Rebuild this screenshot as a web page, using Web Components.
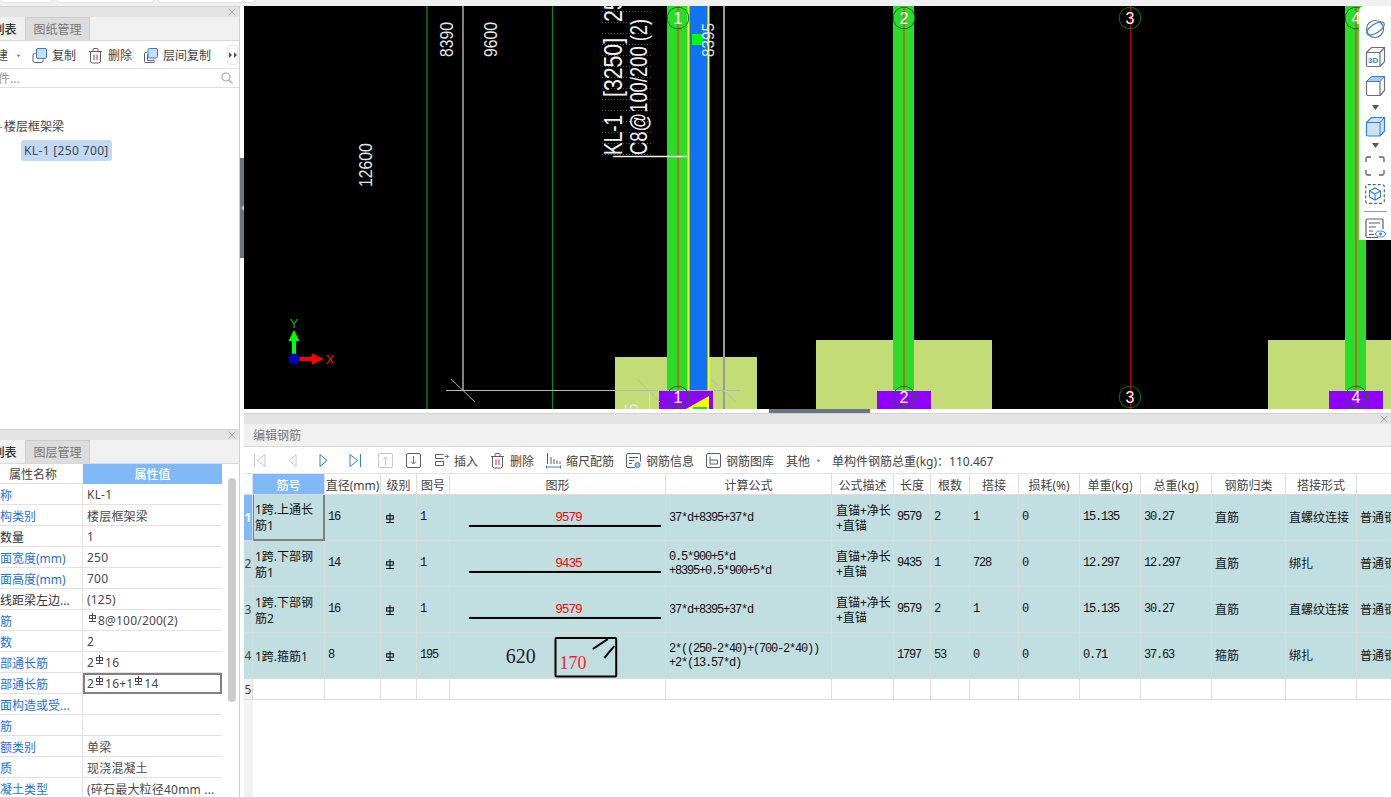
<!DOCTYPE html>
<html lang="zh">
<head>
<meta charset="utf-8">
<title>编辑钢筋</title>
<style>
  html, body { margin: 0; height: 100%; overflow: hidden; background: #fff; }
  body { font: 12px "Noto Sans", "Noto Sans CJK SC", sans-serif; color: #444; }
</style>
</head>
<body>
<work-layout>
  <dock-panel slot="left-top">
    <tab-strip tabs="构件列表,图纸管理" offset="-40"></tab-strip>
    <tool-bar offset="-16" height="27">
      <tool-btn>新建</tool-btn>
      <ui-icon name="caret" size="7" style="margin:0 0 0 7px"></ui-icon>
      <tool-btn icon="copy" style="margin-left:10px">复制</tool-btn>
      <tool-btn icon="trash" style="margin-left:12px">删除</tool-btn>
      <tool-btn icon="copy2" style="margin-left:11px">层间复制</tool-btn>
      <more-btn style="margin-left:auto;margin-right:1px"></more-btn>
    </tool-bar>
    <search-row placeholder="搜索构件..."></search-row>
    <comp-tree></comp-tree>
  </dock-panel>

  <dock-panel slot="left-bottom">
    <tab-strip tabs="属性列表,图层管理" offset="-40"></tab-strip>
    <prop-grid></prop-grid>
  </dock-panel>

  <cad-canvas slot="canvas">
    <view-bar></view-bar>
  </cad-canvas>

  <dock-panel slot="bottom">
    <caption-row>编辑钢筋</caption-row>
    <tool-bar offset="7" height="26">
      <tool-btn icon="first" style="margin-left:1px"></tool-btn>
      <tool-btn icon="prev" style="margin-left:18px"></tool-btn>
      <tool-btn icon="next" style="margin-left:16px"></tool-btn>
      <tool-btn icon="last" style="margin-left:17px"></tool-btn>
      <tool-btn icon="up" style="margin-left:15px"></tool-btn>
      <tool-btn icon="down" style="margin-left:13px"></tool-btn>
      <tool-btn icon="insert" style="margin-left:13px">插入</tool-btn>
      <tool-btn icon="trash" style="margin-left:12px">删除</tool-btn>
      <tool-btn icon="ruler" style="margin-left:12px">缩尺配筋</tool-btn>
      <tool-btn icon="info" style="margin-left:12px">钢筋信息</tool-btn>
      <tool-btn icon="lib" style="margin-left:12px">钢筋图库</tool-btn>
      <tool-btn style="margin-left:12px">其他</tool-btn>
      <ui-icon name="caret" size="7" style="margin-left:5px"></ui-icon>
      <span style="margin-left:10px">单构件钢筋总重(kg)：110.467</span>
    </tool-bar>
    <rebar-table></rebar-table>
  </dock-panel>
</work-layout>

<script>
// 图标 (inline svg)
const DARK = '#5a5f66';
const BLUE = '#2f7fe0';
const ICONS = {
  caret: `<path d="M3 6h9l-4.500 5z" fill="#888"/>`,
  copy: `<path d="M3.500 5.500h-1a1.500 1.500 0 0 0-1.500 1.500v6a1.500 1.500 0 0 0 1.500 1.500h7a1.500 1.500 0 0 0 1.500-1.500v-1.500" fill="none" stroke="${DARK}"/><rect x="4.500" y=".5" width="10" height="10" rx="1.500" fill="#c9def6" stroke="${BLUE}"/>`,
  copy2: `<path d="M3.500 4.500h-1a1 1 0 0 0-1 1v8a1 1 0 0 0 1 1h8a1 1 0 0 0 1-1v-1M5.500 6.500h-1v6h6v-1" fill="none" stroke="${DARK}"/><rect x="5" y=".5" width="9.500" height="9.500" rx="1.500" fill="#c9def6" stroke="${BLUE}"/>`,
  trash: `<path d="M1 3.500h13M5 3.500v-2a1 1 0 0 1 1-1h3a1 1 0 0 1 1 1v2M2.500 3.500v9.500a2 2 0 0 0 2 2h6a2 2 0 0 0 2-2V3.500" fill="none" stroke="${DARK}"/><path d="M6 6.500v5.500M9 6.500v5.500" stroke="#d8232a"/>`,
  first: `<path d="M2.500 1v13M13 1.500v12L5.500 7.500z" fill="none" stroke="#c4c8cc"/>`,
  prev: `<path d="M11 1.500v12L4 7.500z" fill="none" stroke="#c4c8cc"/>`,
  next: `<path d="M4 1.500v12l7-6z" fill="none" stroke="${BLUE}"/>`,
  last: `<path d="M12.500 1v13M2 1.500v12l7.500-6z" fill="none" stroke="${BLUE}"/>`,
  up: `<rect x=".5" y=".5" width="14" height="14" rx="1.500" fill="none" stroke="#c4c8cc"/><path d="M7.500 12V4M5 6.500l2.500-2.500 2.500 2.500" fill="none" stroke="#c4c8cc"/>`,
  down: `<rect x=".5" y=".5" width="14" height="14" rx="1.500" fill="none" stroke="${DARK}"/><path d="M7.500 3v8M5 8.500l2.500 2.500 2.500-2.500" fill="none" stroke="${BLUE}"/>`,
  insert: `<path d="M9.500 1.500h-8v4h8M1.500 8.500h8v4h-8z" fill="none" stroke="${DARK}"/><path d="M10.500 3.500h4M12.500 1.500l2 2-2 2" fill="none" stroke="${BLUE}"/>`,
  ruler: `<path d="M1.500 0v11M5 4v7M8 6v5M11 7.500v3.500M14 8.500v2.500" fill="none" stroke="${DARK}"/><path d="M.5 14h14M.5 12.500v3M14.500 12.500v3" fill="none" stroke="${BLUE}"/>`,
  info: `<path d="M9 14.500H2a1.500 1.500 0 0 1-1.500-1.500V2A1.500 1.500 0 0 1 2 .5h11A1.500 1.500 0 0 1 14.500 2v6.500M3 4.500h9M3 7.500h5M3 10.500h3" fill="none" stroke="${DARK}"/><circle cx="11.500" cy="12" r="2.500" fill="#9cc4f2" stroke="${BLUE}"/>`,
  lib: `<rect x=".5" y=".5" width="14" height="14" rx="1.500" fill="none" stroke="${DARK}"/><path d="M4 3.500v7.500h7.500V7H4" fill="none" stroke="${DARK}"/>`,
  orbit: `<circle cx="10" cy="11" r="8.500" fill="none" stroke="#6b7078" stroke-width="1.200"/><ellipse cx="10.500" cy="10.500" rx="10" ry="4.500" transform="rotate(-32 10.500 10.500)" fill="none" stroke="${BLUE}" stroke-width="1.200"/>`,
  cube3d: `<path d="M1.500 6.500h13.500v14H3a1.500 1.500 0 0 1-1.500-1.500zM1.500 6.500l5-5h13v14l-4.500 5M15 6.500l4.500-5" fill="none" stroke="#6b7078" stroke-width="1.200"/><text x="3" y="17" font-family="Liberation Sans" font-size="8" font-weight="700" fill="${BLUE}">3D</text>`,
  cubetop: `<path d="M1.500 6.500l5-5h13l-4.500 5z" fill="#a9cbf3" stroke="${BLUE}"/><path d="M1.500 6.500h13.500v14H3a1.500 1.500 0 0 1-1.500-1.500zM15 20.500l4.500-5v-14" fill="none" stroke="#6b7078" stroke-width="1.200"/>`,
  cubefull: `<path d="M1.500 6.500l5-5h13v13.500l-4.500 5H3a1.500 1.500 0 0 1-1.500-1.500z" fill="#cfe1f8" stroke="${BLUE}" stroke-width="1.200"/><path d="M1.500 6.500H15v13.500M15 6.500l4.500-5" fill="none" stroke="${BLUE}"/>`,
  frame: `<path d="M1 6V2.500A1.500 1.500 0 0 1 2.500 1H6M14 1h3.500A1.500 1.500 0 0 1 19 2.500V6M19 14v3.500a1.500 1.500 0 0 1-1.500 1.500H14M6 19H2.500A1.500 1.500 0 0 1 1 17.500V14" fill="none" stroke="#5a5f70" stroke-width="1.300"/>`,
  dashcube: `<rect x=".7" y=".7" width="18.600" height="18.600" rx="2" fill="none" stroke="#5a5f70" stroke-width="1.200" stroke-dasharray="3 2"/><path d="M10 4l5.500 3v6L10 16l-5.500-3V7zM4.500 7l5.500 3 5.500-3M10 10v6" fill="none" stroke="${BLUE}" stroke-width="1.100"/>`,
  listeye: `<path d="M13 19.500H2.500A1.500 1.500 0 0 1 1 18V2.500A1.500 1.500 0 0 1 2.500 1h14A1.500 1.500 0 0 1 18 2.500V11M4 5h11M4 9h7M4 13h4M4 16.500h5" fill="none" stroke="#5a5f70" stroke-width="1.200"/><ellipse cx="15.500" cy="16" rx="5" ry="3" fill="#fff" stroke="${BLUE}"/><circle cx="15.500" cy="16" r="1.400" fill="${BLUE}"/>`
};

class UiIcon extends HTMLElement {
  connectedCallback() {
    const size = this.getAttribute('size') || 15;
    const box = this.getAttribute('box') || 15;
    this.attachShadow({ mode: 'open' }).innerHTML = `
      <style>:host { display: inline-flex; flex: none; } svg { display: block; overflow: visible; }</style>
      <svg width="${size}" height="${size}" viewBox="0 0 ${box} ${box}">${ICONS[this.getAttribute('name')] || ''}</svg>`;
  }
}

// 钢筋等级符号
function markSvg(w, h) {
  return `<svg width="${w}" height="${h}" viewBox="0 0 9 9" fill="none" stroke="currentColor" stroke-width="1">
    <rect x="1.500" y="2.500" width="6" height="3"/><path d="M4.500 0v8.500M1 8.500h7"/>
  </svg>`;
}
class RebarMark extends HTMLElement {
  connectedCallback() {
    this.attachShadow({ mode: 'open' }).innerHTML = `
      <style>
        :host { display: inline-block; width: 9px; height: 9px; vertical-align: 3px; margin: 0 1px; flex: none; }
        svg { display: block; }
      </style>
      ${markSvg(9, 9)}`;
  }
}

class WorkLayout extends HTMLElement {
  connectedCallback() {
    this.attachShadow({ mode: 'open' }).innerHTML = `
      <style>
        :host { display: flex; flex-direction: column; height: 100vh; overflow: hidden; background: #f0f0f0; }
        .top { display: flex; gap: 4px; height: 6px; flex: none; }
        .top i { display: block; height: 2px; background: #fff; border: 1px solid #e2e2e2; border-top: 0; border-radius: 0 0 3px 3px; }
        .main { flex: 1; display: flex; min-height: 0; }
        .left { width: 240px; flex: none; display: flex; flex-direction: column; border-right: 0; }
        .left ::slotted([slot=left-top]) { height: 423px; flex: none; border-right: 1px solid #cfcfcf; box-sizing: border-box; }
        .left ::slotted([slot=left-bottom]) { flex: 1; min-height: 0; border-right: 1px solid #cfcfcf; box-sizing: border-box; }
        .gutter { width: 4px; flex: none; background: #fff; display: flex; align-items: flex-start; padding-top: 152px; box-sizing: border-box; }
        .handle { width: 4px; height: 100px; background: #6b7680; display: flex; align-items: center; justify-content: center; }
        .handle:before { content: ""; border: 3px solid transparent; border-right-color: #b8c0c6; border-left: 0; }
        .right { flex: 1; min-width: 0; display: flex; flex-direction: column; }
        .split { height: 4px; background: #fff; flex: none; display: flex; padding-left: 525px; }
        .split div { width: 101px; height: 4px; background: #6b7680; }
        .right ::slotted([slot=bottom]) { flex: 1; min-height: 0; }
      </style>
      <div class="top"><i style="width:50px"></i><i style="width:96px"></i><i style="width:96px"></i></div>
      <div class="main">
        <div class="left"><slot name="left-top"></slot><slot name="left-bottom"></slot></div>
        <div class="gutter"><div class="handle"></div></div>
        <div class="right">
          <slot name="canvas"></slot>
          <div class="split"><div></div></div>
          <slot name="bottom"></slot>
        </div>
      </div>`;
  }
}

class DockPanel extends HTMLElement {
  connectedCallback() {
    this.attachShadow({ mode: 'open' }).innerHTML = `
      <style>
        :host { display: flex; flex-direction: column; overflow: hidden; background: #fff; }
        .title { height: 10px; flex: none; background: #e4e4e4; border-top: 1px solid #d2d2d2; display: flex; justify-content: flex-end; align-items: center; padding-right: 3px; overflow: hidden; }
        svg { display: block; }
      </style>
      <div class="title">
        <svg width="8" height="8" viewBox="0 0 8 8"><path d="M.5.5l7 7M7.500.5l-7 7" stroke="#a8a8a8"/></svg>
      </div>
      <slot></slot>`;
  }
}

class TabStrip extends HTMLElement {
  connectedCallback() {
    const tabs = this.getAttribute('tabs').split(',');
    const off = this.getAttribute('offset') || 0;
    this.attachShadow({ mode: 'open' }).innerHTML = `
      <style>
        :host { display: flex; height: 23px; flex: none; background: #f0f0f0; border-bottom: 1px solid #dadada; overflow: hidden; }
        div { width: 65px; flex: none; box-sizing: border-box; display: flex; align-items: center; justify-content: center; font-size: 12px; }
        .on { color: #333; font-weight: 500; }
        .off { background: #dcdcdc; color: #777; border: 1px solid #cccccc; border-bottom: 0; }
      </style>
      ${tabs.map((t, i) => `<div class="${i ? 'off' : 'on'}" ${i ? '' : `style="margin-left:${off}px"`}>${t}</div>`).join('')}`;
  }
}

class ToolBar extends HTMLElement {
  connectedCallback() {
    const h = this.getAttribute('height') || 27;
    const off = this.getAttribute('offset') || 0;
    this.attachShadow({ mode: 'open' }).innerHTML = `
      <style>
        :host { display: flex; align-items: center; height: ${h}px; flex: none; background: #fff; border-bottom: 1px solid #e4e4e4; color: #444; white-space: nowrap; overflow: hidden; }
        div { display: flex; align-items: center; flex: 1; margin-left: ${off}px; min-width: 0; padding-top: 1px; }
      </style>
      <div><slot></slot></div>`;
  }
}

class ToolBtn extends HTMLElement {
  connectedCallback() {
    const icon = this.getAttribute('icon');
    const withText = this.textContent.trim() !== '';
    this.attachShadow({ mode: 'open' }).innerHTML = `
      <style>
        :host { display: inline-flex; align-items: center; flex: none; }
        ui-icon { margin-right: ${withText ? 5 : 0}px; }
      </style>
      ${icon ? `<ui-icon name="${icon}"></ui-icon>` : ''}<slot></slot>`;
  }
}

class MoreBtn extends HTMLElement {
  connectedCallback() {
    this.attachShadow({ mode: 'open' }).innerHTML = `
      <style>
        :host { display: flex; width: 11px; height: 20px; box-sizing: border-box; flex: none; align-items: center; justify-content: center; border: 1px solid #e8e8e8; border-radius: 3px; }
      </style>
      <svg width="8" height="6" viewBox="0 0 8 6"><path d="M0 0l3 3-3 3zM5 0l3 3-3 3z" fill="#555"/></svg>`;
  }
}

class SearchRow extends HTMLElement {
  connectedCallback() {
    this.attachShadow({ mode: 'open' }).innerHTML = `
      <style>
        :host { display: flex; align-items: center; height: 18px; flex: none; background: #fff; border-bottom: 1px solid #e0e0e0; color: #999; overflow: hidden; }
        span { margin-left: -38px; flex: 1; white-space: nowrap; }
        svg { margin-right: 6px; flex: none; }
      </style>
      <span>${this.getAttribute('placeholder')}</span>
      <svg width="12" height="12" viewBox="0 0 12 12" fill="none" stroke="#aaa" stroke-width="1.200"><circle cx="5" cy="5" r="4"/><path d="M8 8l3.500 3.500"/></svg>`;
  }
}

class CompTree extends HTMLElement {
  connectedCallback() {
    this.attachShadow({ mode: 'open' }).innerHTML = `
      <style>
        :host { display: block; flex: 1; background: #fff; padding-top: 29px; color: #444; }
        .group { height: 20px; line-height: 20px; padding-left: 4px; position: relative; }
        .group:before { content: ""; position: absolute; left: 0; top: 10px; width: 2px; height: 1px; background: #999; }
        .leaf { display: inline-block; margin: 3px 0 0 21px; padding: 0 3px; height: 21px; line-height: 21px; background: #c3d9f1; border-radius: 3px; color: #3d4a58; letter-spacing: .35px; }
      </style>
      <div class="group">楼层框架梁</div>
      <div class="leaf">KL-1 [250 700]</div>`;
  }
}

// 属性列表
const PROPS = [
  ['名称', 'KL-1', 1], ['结构类别', '楼层框架梁', 1], ['跨数量', '1', 0],
  ['截面宽度(mm)', '250', 1], ['截面高度(mm)', '700', 1], ['轴线距梁左边...', '(125)', 0],
  ['箍筋', '<rebar-mark></rebar-mark>8@100/200(2)', 1], ['肢数', '2', 1],
  ['上部通长筋', '2<rebar-mark></rebar-mark>16', 1], ['下部通长筋', '2<rebar-mark></rebar-mark>16+1<rebar-mark></rebar-mark>14', 1, 1],
  ['侧面构造或受...', '', 1], ['拉筋', '', 1], ['定额类别', '单梁', 1], ['材质', '现浇混凝土', 1],
  ['混凝土类型', '(碎石最大粒径40mm ...', 1]
];

class PropGrid extends HTMLElement {
  connectedCallback() {
    const rows = PROPS.map(([name, val, link, sel]) => `
      <div class="n${link ? ' link' : ''}"><span>${name}</span></div>
      <div class="v${sel ? ' sel' : ''}"><span>${val}</span></div>`).join('');
    this.attachShadow({ mode: 'open' }).innerHTML = `
      <style>
        :host { display: grid; grid-template-columns: 222px 17px; flex: 1; min-height: 0; overflow: hidden; background: #fff; }
        .grid { display: grid; grid-template-columns: 100px 139px; grid-template-rows: 20px; grid-auto-rows: 21px; margin-left: -17px; align-content: start; }
        .grid > div { display: flex; align-items: center; box-sizing: border-box; border-bottom: 1px solid #e2e2e2; white-space: nowrap; overflow: hidden; }
        .grid > .h { justify-content: center; }
        .grid > .hv { background: #7fb9f8; color: #fff; font-weight: 500; justify-content: center; border: 0; }
        .n { padding: 1px 0 0 5px; color: #333; border-right: 1px solid #e2e2e2; }
        .n.link { color: #1f6fe0; }
        .v { padding: 1px 0 0 4px; color: #4a4a4a; letter-spacing: .2px; }
        .grid > .sel { border: 2px solid #808080; padding: 0 0 0 2px; }
        .track { padding: 14px 3px 0 6px; }
        .thumb { width: 8px; height: 224px; background: #cbcbcb; border-radius: 4px; }
      </style>
      <div class="grid">
        <div class="h">属性名称</div><div class="hv">属性值</div>
        ${rows}
      </div>
      <div class="track"><div class="thumb"></div></div>`;
  }
}

class CaptionRow extends HTMLElement {
  connectedCallback() {
    this.attachShadow({ mode: 'open' }).innerHTML = `
      <style>
        :host { display: flex; align-items: center; height: 22px; flex: none; padding-left: 9px; background: #f0f0f0; border-bottom: 1px solid #dadada; color: #777; }
      </style>
      <slot></slot>`;
  }
}

// 钢筋表
const COLS = [
  ['', 9], ['筋号', 72], ['直径(mm)', 56], ['级别', 36], ['图号', 33], ['图形', 216], ['计算公式', 166],
  ['公式描述', 62], ['长度', 37], ['根数', 39], ['搭接', 49], ['损耗(%)', 61], ['单重(kg)', 61],
  ['总重(kg)', 71], ['钢筋归类', 74], ['搭接形式', 71], ['', 100]
];
const DESC = '直锚+净长\n+直锚';
const KIND = '普通钢筋';
const ROWS = [
  ['1跨.上通长\n筋1', '16', '1', 'line:9579', '37*d+8395+37*d', DESC, '9579', '2', '1', '0', '15.135', '30.27', '直筋', '直螺纹连接', KIND],
  ['1跨.下部钢\n筋1', '14', '1', 'line:9435', '0.5*900+5*d\n+8395+0.5*900+5*d', DESC, '9435', '1', '728', '0', '12.297', '12.297', '直筋', '绑扎', KIND],
  ['1跨.下部钢\n筋2', '16', '1', 'line:9579', '37*d+8395+37*d', DESC, '9579', '2', '1', '0', '15.135', '30.27', '直筋', '直螺纹连接', KIND],
  ['1跨.箍筋1', '8', '195', 'hoop', '2*((250-2*40)+(700-2*40))\n+2*(13.57*d)', '', '1797', '53', '0', '0', '0.71', '37.63', '箍筋', '绑扎', KIND]
];

function shapeSvg(kind) {
  if (kind === 'hoop') {
    return `<svg width="216" height="45" viewBox="0 0 216 45">
      <text x="56" y="30" font-family="Liberation Serif" font-size="20" fill="#222">620</text>
      <rect x="106" y="5" width="61" height="38.500" rx="1" fill="none" stroke="#000" stroke-width="2"/>
      <path d="M143.500 16l15-10M155 25l10-12" stroke="#000" stroke-width="2" fill="none"/>
      <text x="110" y="36" font-family="Liberation Serif" font-size="18" fill="#ff1a2a">170</text>
    </svg>`;
  }
  const len = kind.split(':')[1];
  return `<svg width="216" height="45" viewBox="0 0 216 45">
    <text x="119" y="26" text-anchor="middle" font-family="Liberation Mono" font-size="13" letter-spacing="-1.200" fill="#ff0000">${len}</text>
    <rect x="19" y="30" width="193" height="2" fill="#000"/>
  </svg>`;
}

class RebarTable extends HTMLElement {
  connectedCallback() {
    const head = COLS.map(([t], i) => `<div class="th${i === 1 ? ' hot' : ''}">${t}</div>`).join('');
    const body = ROWS.map((r, ri) => {
      const cells = r.map((v, i) => {
        if (i === 0) return `<div class="td name${ri === 0 ? ' cur' : ''}">${v}</div>`;
        if (i === 3) return `<div class="td fig">${shapeSvg(v)}</div>`;
        if (i === 4) return `<div class="td mono formula">${v}</div>`;
        if (i === 5) return `<div class="td cjk tight">${v}</div>`;
        if (i >= 12) return `<div class="td cjk">${v}</div>`;
        return `<div class="td mono">${v}</div>`;
      });
      // 级别 列插在直径之后
      cells.splice(2, 0, `<div class="td sym">${markSvg(10, 10)}</div>`);
      return `<div class="rh${ri === 0 ? ' cur' : ''}">${ri + 1}</div>${cells.join('')}`;
    }).join('');
    const blank = COLS.map((c, i) => i ? '<div class="td blank"></div>' : '<div class="rh blank">5</div>').join('');
    this.attachShadow({ mode: 'open' }).innerHTML = `
      <style>
        :host { display: block; flex: 1; min-height: 0; overflow: hidden; background: #fff; }
        .grid { display: grid; grid-template-columns: ${COLS.map(c => c[1] + 'px').join(' ')}; grid-template-rows: 21px repeat(4, 46px) 21px 200px; width: max-content; }
        .th { display: flex; align-items: center; justify-content: center; white-space: nowrap; color: #444; border-right: 1px solid #dcdcdc; border-bottom: 1px solid #dcdcdc; box-sizing: border-box; overflow: hidden; padding-top: 1px; }
        .th.hot { background: #7fb9f8; color: #fff; font-weight: 500; }
        .td, .rh { box-sizing: border-box; display: flex; align-items: center; background: #c1dee1; border-right: 1px solid #d6dcdc; border-bottom: 1px solid #d6dcdc; color: #111; overflow: hidden; white-space: pre; }
        .rh { justify-content: center; color: #444; }
        .rh.cur { background: #7fb9f8; color: #fff; font-weight: 700; }
        .td.blank, .rh.blank { background: #fff; border-color: #dcdcdc; }
        .rh.blank { background: #f2f2f2; }
        .mono { font: 12px/14px "Liberation Mono", monospace; letter-spacing: -1.200px; padding: 0 0 2px 3px; }
        .formula { padding: 0 0 0 3px; }
        .name { line-height: 16px; padding: 2px 0 0 2px; }
        .cjk { line-height: 16px; padding-left: 3px; }
        .tight { line-height: 15px; padding: 1px 0 0 4px; }
        .cur.td { border: 2px solid #808080; border-left-width: 1px; border-top: 0; padding-left: 1px; }
        .sym { padding-left: 4px; }
        .sym svg { display: block; flex: none; }
        .fig svg { display: block; }
        .filler { background: #f2f2f2; grid-column: 1; }
      </style>
      <div class="grid">
        ${head}${body}${blank}
        <div class="filler"></div>
      </div>`;
  }
}

// 绘图区: 坐标直接用页面坐标 (viewBox 244 6)
function axisBubble(cx, cy, label) {
  const pts = [];
  for (let i = 0; i < 12; i++) {
    const a = (i + 0.5) * Math.PI / 6;
    pts.push((cx + 11 * Math.cos(a)).toFixed(1) + ',' + (cy + 11 * Math.sin(a)).toFixed(1));
  }
  return `<polygon points="${pts.join(' ')}" fill="none" stroke="#0a7a0a"/>
    <text x="${cx}" y="${cy + 6}" text-anchor="middle" font-size="16" fill="#fff">${label}</text>`;
}
// 竖排文字, sx 为沿文字方向的压缩比
function rotText(x, y, size, text, sx = 1, fill = '#e6e6e6') {
  return `<text transform="translate(${x} ${y}) rotate(-90) scale(${sx} 1)" font-size="${size}" fill="${fill}">${text}</text>`;
}

class CadCanvas extends HTMLElement {
  connectedCallback() {
    const G = '#2bdc2b', PUR = '#8f00ff', PAD = '#c3dc76', AX = '#b0701e', W = '#f2f2f2';
    let ticks = '';
    for (let k = 0; k < 14; k++) {
      const y = 11.500 + 11 * k;
      ticks += `<path d="M602 ${y}H651" stroke="#555" stroke-dasharray="1 2"/>`;
    }
    this.attachShadow({ mode: 'open' }).innerHTML = `
      <style>
        :host { display: block; height: 403px; flex: none; position: relative; background: #000; overflow: hidden; }
        svg { display: block; font-family: "Liberation Sans", sans-serif; }
      </style>
      <svg width="1147" height="403" viewBox="244 6 1147 403">
        <rect x="615" y="357" width="142" height="52" fill="${PAD}"/>
        <rect x="816" y="340" width="176" height="69" fill="${PAD}"/>
        <rect x="1268" y="340" width="123" height="69" fill="${PAD}"/>
        <path d="M427 6V409" stroke="#0b5a0b" stroke-width="2"/>
        <path d="M552.500 6V409" stroke="#0a8a0a"/>
        <path d="M463 6V390" stroke="#808080" stroke-width="2"/>
        <path d="M724 6V409" stroke="#9a9a9a" stroke-width="2"/>
        <path d="M649.500 390V409" stroke="#ddd"/>
        <!-- 柱 -->
        <rect x="667" y="6" width="21" height="384" fill="${G}"/>
        <rect x="893" y="6" width="21" height="384" fill="${G}"/>
        <rect x="1345" y="6" width="21" height="384" fill="${G}"/>
        <rect x="689" y="6" width="19" height="384" fill="#1273f0"/>
        <path d="M688.500 6V409M708.500 6V409" stroke="#ffff00" stroke-width="2"/>
        <rect x="659" y="391" width="54" height="18" fill="${PUR}"/>
        <rect x="877" y="391" width="54" height="18" fill="${PUR}"/>
        <rect x="1329" y="391" width="54" height="18" fill="${PUR}"/>
        <path d="M686 409L709 396V409z" fill="#ffff00"/>
        <rect x="693" y="407" width="14" height="2" fill="#2bdc2b"/>
        <!-- 轴线 -->
        <path d="M678 6V390M904 6V390M1356 6V390" stroke="${AX}" stroke-width="2"/>
        <path d="M678 391V409M904 391V409M1356 391V409" stroke="#d0109a"/>
        <path d="M1130.500 6V409" stroke="#c00000"/>
        <!-- 标注 -->
        <path d="M446 390.500H740" stroke="#b8b8b8"/>
        <path d="M451 379L475 402M637 379L660 402M711 379L736 402" stroke="#bdbdbd"/>
        ${rotText(453, 57, 18, '8390', .875)}
        ${rotText(497, 57, 18, '9600', .875)}
        ${rotText(372, 187, 18, '12600', .875)}
        <rect x="692" y="34" width="11" height="11" fill="#00ff00"/>
        ${rotText(714, 57, 17, '8395', .9)}
        ${ticks}
        ${rotText(622, 155, 25, 'KL-1', .76, W)}
        ${rotText(622, 97, 25, '[3250]', .85, W)}
        ${rotText(622, 22, 25, '250*700', .85, W)}
        ${rotText(647, 155, 23, 'C8@100/200 (2)', .8, W)}
        <path d="M613 156.500H687" stroke="${W}" stroke-width="1.500"/>
        ${rotText(638, 421, 18, '15', .875)}
        ${axisBubble(678, 18, 1)}${axisBubble(904, 18, 2)}${axisBubble(1130, 18, 3)}${axisBubble(1356, 18, 4)}
        ${axisBubble(678, 397, 1)}${axisBubble(904, 397, 2)}${axisBubble(1130, 397, 3)}${axisBubble(1356, 397, 4)}
        <!-- 坐标系 -->
        <rect x="292" y="340" width="4" height="16" fill="#00ff00"/>
        <path d="M294 330L299.500 341H288.500z" fill="#00ff00"/>
        <rect x="298" y="357" width="16" height="4" fill="#ff0000"/>
        <path d="M324 359L312 353.500V364.500z" fill="#ff0000"/>
        <circle cx="294" cy="359" r="5.500" fill="#0000b4"/>
        <text x="294" y="328" text-anchor="middle" font-size="13" fill="#0bb00b">Y</text>
        <text x="330" y="364" text-anchor="middle" font-size="13" fill="#ff1010">X</text>
      </svg>
      <slot></slot>`;
  }
}

// 右侧视图工具条
class ViewBar extends HTMLElement {
  connectedCallback() {
    const i = (n, s = 21) => `<ui-icon name="${n}" size="${s}" box="${s}"></ui-icon>`;
    const arrow = `<svg width="7" height="5" viewBox="0 0 7 5"><path d="M0 0h7L3.500 5z" fill="#555"/></svg>`;
    this.attachShadow({ mode: 'open' }).innerHTML = `
      <style>
        :host { position: absolute; right: 0; top: 0; width: 32px; height: 234px; background: #fff; border-radius: 5px 0 0 0; display: flex; flex-direction: column; align-items: center; box-sizing: border-box; padding: 12px 0 0 0; }
        svg { display: block; }
        hr { width: 23px; border: 0; border-top: 1px solid #999; margin: 7px 0 6px; flex: none; }
      </style>
      ${i('orbit', 20)}
      <div style="height:8px"></div>${i('cube3d')}
      <div style="height:8px"></div>${i('cubetop')}
      <div style="height:9px"></div>${arrow}
      <div style="height:6px"></div>${i('cubefull', 20)}
      <div style="height:7px"></div>${arrow}
      <div style="height:8px"></div>${i('frame', 20)}
      <div style="height:8px"></div>${i('dashcube', 20)}
      <hr>${i('listeye', 20)}`;
  }
}

customElements.define('ui-icon', UiIcon);
customElements.define('rebar-mark', RebarMark);
customElements.define('work-layout', WorkLayout);
customElements.define('dock-panel', DockPanel);
customElements.define('tab-strip', TabStrip);
customElements.define('tool-bar', ToolBar);
customElements.define('tool-btn', ToolBtn);
customElements.define('more-btn', MoreBtn);
customElements.define('search-row', SearchRow);
customElements.define('comp-tree', CompTree);
customElements.define('prop-grid', PropGrid);
customElements.define('caption-row', CaptionRow);
customElements.define('rebar-table', RebarTable);
customElements.define('cad-canvas', CadCanvas);
customElements.define('view-bar', ViewBar);
</script>
</body>
</html>
